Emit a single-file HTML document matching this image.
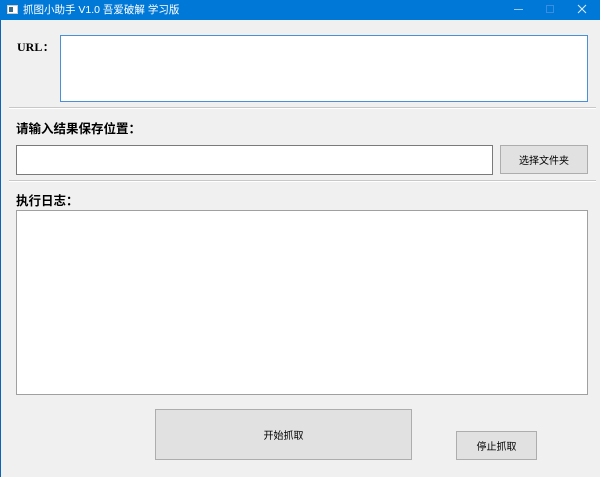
<!DOCTYPE html>
<html><head><meta charset="utf-8"><style>
*{margin:0;padding:0;box-sizing:border-box}
body{width:600px;height:477px;background:#f0f0f0;position:relative;overflow:hidden;font-family:"Liberation Sans","Noto Sans CJK SC",sans-serif}
.title{position:absolute;left:0;top:0;width:600px;height:20px;background:#0078d7;color:#fff;font-size:10.5px;line-height:20px}
.lb{position:absolute;left:0;top:20px;width:1px;height:457px;background:#0a64b8}
.a{position:absolute}
.box{background:#fff;border:1px solid #7a7a7a}
.btn{background:#e1e1e1;border:1px solid #adadad;font-size:10px;color:#000;display:flex;align-items:center;justify-content:center}
.lbl{font-weight:bold;font-size:12.5px;color:#000}
.sep{height:2px;border-top:1px solid #c8c8c8;border-bottom:1px solid #fff}
</style></head><body>
<div class="title">
<div class="a" style="left:7px;top:5px;width:11px;height:9px;background:#fff;border:1px solid #ccc"><div style="position:absolute;left:1px;top:1px;width:4px;height:5px;background:#3a6a8a"></div></div>
<span class="a" style="left:23px;top:0">抓图小助手 V1.0 吾爱破解 学习版</span>
<div class="a" style="left:514px;top:9px;width:9px;height:1px;background:#9cc8f0"></div>
<div class="a" style="left:546px;top:5px;width:8px;height:8px;border:1px solid #3a8ee0"></div>
<svg class="a" style="left:577px;top:4px" width="10" height="10"><path d="M1 1L9 9M9 1L1 9" stroke="#e0eefa" stroke-width="1"/></svg>
</div>
<div class="lb"></div>
<div class="a lbl" style="left:17px;top:38px;font-family:'Liberation Serif','Noto Serif CJK SC',serif;font-size:12px">URL：</div>
<div class="a box" style="left:60px;top:35px;width:528px;height:67px;border-color:#4a90d8"></div>
<div class="a sep" style="left:9px;top:107px;width:587px"></div>
<div class="a lbl" style="left:16px;top:118px">请输入结果保存位置：</div>
<div class="a box" style="left:16px;top:145px;width:477px;height:30px"></div>
<div class="a btn" style="left:500px;top:145px;width:88px;height:29px">选择文件夹</div>
<div class="a sep" style="left:9px;top:180px;width:587px"></div>
<div class="a lbl" style="left:16px;top:190px">执行日志：</div>
<div class="a box" style="left:16px;top:210px;width:572px;height:185px;border-color:#a0a0a0"></div>
<div class="a btn" style="left:155px;top:409px;width:257px;height:51px">开始抓取</div>
<div class="a btn" style="left:456px;top:431px;width:81px;height:29px">停止抓取</div>
</body></html>
